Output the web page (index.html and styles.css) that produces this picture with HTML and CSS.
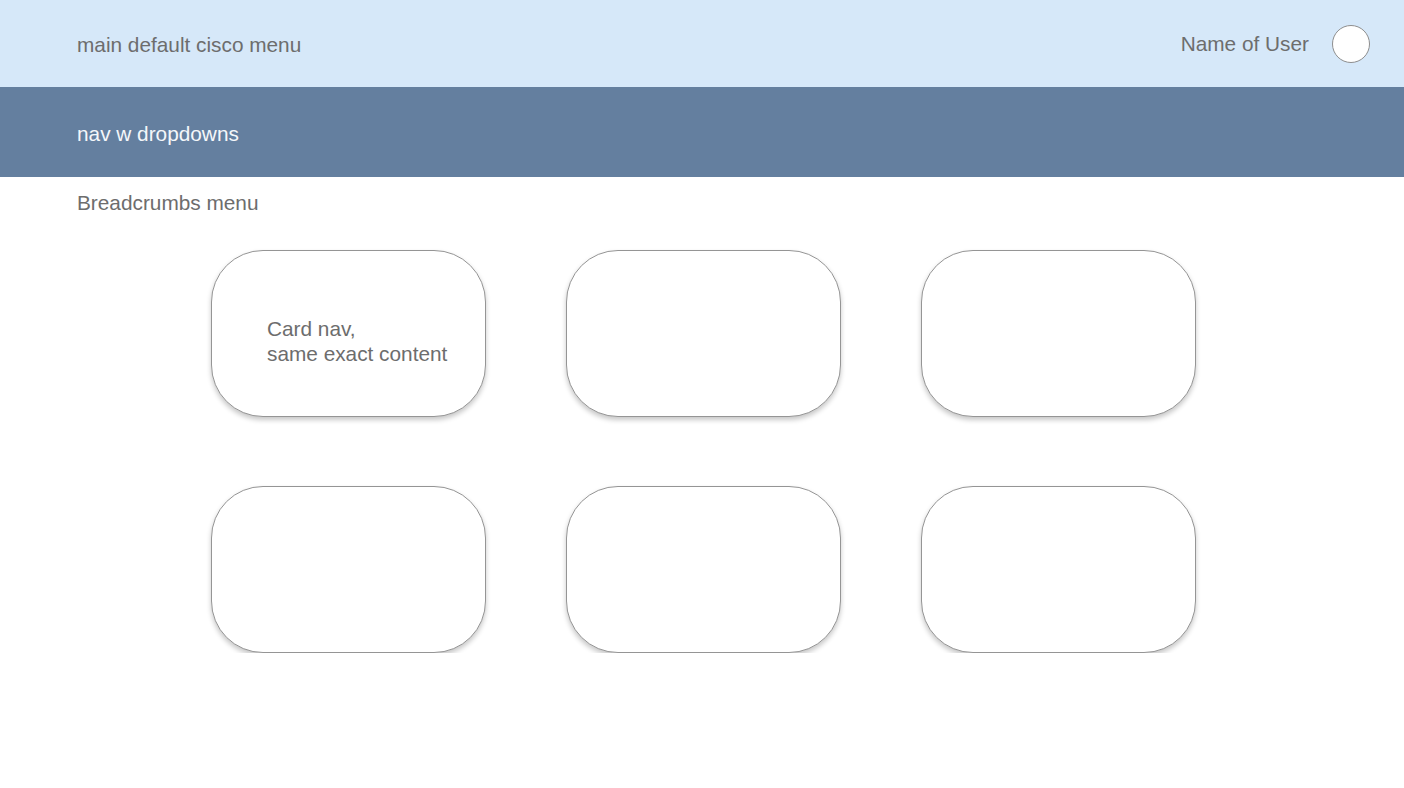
FILE: index.html
```html
<!DOCTYPE html>
<html>
<head>
<meta charset="utf-8">
<link rel="stylesheet" href="styles.css">
</head>
<body>
<header class="top">
  <div class="brand">main default cisco menu</div>
  <div class="user">
    <span class="user-name">Name of User</span>
    <span class="avatar"></span>
  </div>
</header>
<nav class="nav">nav w dropdowns</nav>
<div class="crumbs">Breadcrumbs menu</div>
<main class="cards">
  <div class="card"><p class="card-text">Card nav,<br>same exact content</p></div>
  <div class="card"></div>
  <div class="card"></div>
  <div class="card"></div>
  <div class="card"></div>
  <div class="card"></div>
</main>
</body>
</html>
```
FILE: styles.css
```css
* { box-sizing: border-box; }
body {
  margin: 0;
  font-family: "Liberation Sans", Arial, sans-serif;
  font-size: 20.8px;
  color: #6d6d6d;
  background: #fff;
}
.top {
  height: 87px;
  background: #d6e8f9;
  display: flex;
  align-items: center;
  justify-content: space-between;
  padding: 0 34px 0 77px;
}
.brand { padding-top: 2px; }
.user { display: flex; align-items: center; gap: 23px; }
.avatar {
  width: 38px;
  height: 38px;
  border-radius: 50%;
  background: #fff;
  border: 1px solid #8e8e8e;
}
.nav {
  height: 90px;
  background: #647f9f;
  color: #f4f7fa;
  display: flex;
  align-items: center;
  padding: 4px 0 0 77px;
}
.crumbs {
  padding: 14px 0 0 77px;
  height: 73px;
  line-height: 24px;
}
.cards {
  display: grid;
  grid-template-columns: repeat(3, 275px);
  column-gap: 80px;
  row-gap: 69px;
  padding-left: 211px;
}
.card {
  height: 167px;
  border: 1px solid #959595;
  border-radius: 52px;
  background: #fff;
  box-shadow: 0 3px 5px rgba(0,0,0,0.22);
  display: flex;
  align-items: center;
}
.card-text {
  margin: 0;
  padding: 15px 0 0 55px;
  line-height: 25px;
}
```
